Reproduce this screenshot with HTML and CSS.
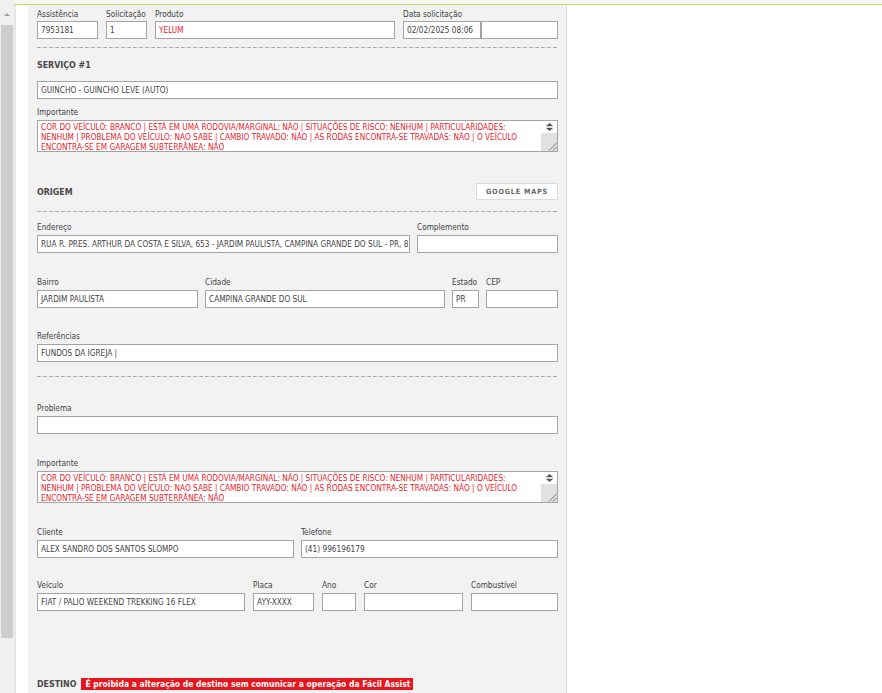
FILE: index.html
```html
<!DOCTYPE html>
<html lang="pt-BR">
<head>
<meta charset="utf-8">
<title>Serviço</title>
<link rel="stylesheet" href="styles.css">
</head>
<body>
<div class="app">
  <div class="vscroll">
    <div class="vscroll-arrow"></div>
    <div class="vscroll-thumb"></div>
  </div>
  <div class="main">
    <div class="topstrip"></div>
    <div class="frame">
      <div class="gutter"></div>
      <div class="panel">

        <div class="row row-head">
          <div class="field w-assist"><div class="lbl">Assistência</div><div class="inp">7953181</div></div>
          <div class="field w-solic"><div class="lbl">Solicitação</div><div class="inp">1</div></div>
          <div class="field w-prod"><div class="lbl">Produto</div><div class="inp red">YELUM</div></div>
          <div class="field w-data">
            <div class="lbl">Data solicitação</div>
            <div class="pair"><div class="inp w-data1">02/02/2025 08:06</div><div class="inp w-data2"></div></div>
          </div>
        </div>

        <div class="dash dash-1"></div>

        <div class="title title-servico">SERVIÇO #1</div>
        <div class="inp inp-servico">GUINCHO - GUINCHO LEVE (AUTO)</div>

        <div class="field blk-imp1">
          <div class="lbl">Importante</div>
          <div class="tarea">
            <div class="tarea-text">
              <div class="tline">COR DO VEÍCULO: BRANCO | ESTÁ EM UMA RODOVIA/MARGINAL: NÃO | SITUAÇÕES DE RISCO: NENHUM | PARTICULARIDADES:</div>
              <div class="tline">NENHUM | PROBLEMA DO VEÍCULO: NAO SABE | CAMBIO TRAVADO: NÃO | AS RODAS ENCONTRA-SE TRAVADAS: NÃO | O VEÍCULO</div>
              <div class="tline">ENCONTRA-SE EM GARAGEM SUBTERRÂNEA: NÃO</div>
            </div>
            <div class="tscroll">
              <div class="tspin">
                <svg width="9" height="10" viewBox="0 0 9 10"><path d="M4.5 1 L8 4 L1 4 Z" fill="#555"/><path d="M1 5 H8" stroke="#bbb" stroke-width="1"/><path d="M1 6 L8 6 L4.5 9 Z" fill="#555"/></svg>
              </div>
              <div class="ttrack">
                <svg class="grip" width="9" height="9" viewBox="0 0 9 9"><path d="M8.5 1 L1 8.5 M8.5 5 L5 8.5" stroke="#777" stroke-width="1"/></svg>
              </div>
            </div>
          </div>
        </div>

        <div class="title-row row-origem">
          <div class="title">ORIGEM</div>
          <div class="btn">GOOGLE MAPS</div>
        </div>

        <div class="dash dash-2"></div>

        <div class="row row-end">
          <div class="field w-end"><div class="lbl">Endereço</div><div class="inp">RUA R. PRES. ARTHUR DA COSTA E SILVA, 653 - JARDIM PAULISTA, CAMPINA GRANDE DO SUL - PR, 83430-000</div></div>
          <div class="field w-comp"><div class="lbl">Complemento</div><div class="inp"></div></div>
        </div>

        <div class="row row-bairro">
          <div class="field w-bairro"><div class="lbl">Bairro</div><div class="inp">JARDIM PAULISTA</div></div>
          <div class="field w-cidade"><div class="lbl">Cidade</div><div class="inp">CAMPINA GRANDE DO SUL</div></div>
          <div class="field w-estado"><div class="lbl">Estado</div><div class="inp">PR</div></div>
          <div class="field w-cep"><div class="lbl">CEP</div><div class="inp"></div></div>
        </div>

        <div class="field blk-ref">
          <div class="lbl">Referências</div>
          <div class="inp">FUNDOS DA IGREJA |</div>
        </div>

        <div class="dash dash-3"></div>

        <div class="field blk-prob">
          <div class="lbl">Problema</div>
          <div class="inp"></div>
        </div>

        <div class="field blk-imp2">
          <div class="lbl">Importante</div>
          <div class="tarea">
            <div class="tarea-text">
              <div class="tline">COR DO VEÍCULO: BRANCO | ESTÁ EM UMA RODOVIA/MARGINAL: NÃO | SITUAÇÕES DE RISCO: NENHUM | PARTICULARIDADES:</div>
              <div class="tline">NENHUM | PROBLEMA DO VEÍCULO: NAO SABE | CAMBIO TRAVADO: NÃO | AS RODAS ENCONTRA-SE TRAVADAS: NÃO | O VEÍCULO</div>
              <div class="tline">ENCONTRA-SE EM GARAGEM SUBTERRÂNEA: NÃO</div>
            </div>
            <div class="tscroll">
              <div class="tspin">
                <svg width="9" height="10" viewBox="0 0 9 10"><path d="M4.5 1 L8 4 L1 4 Z" fill="#555"/><path d="M1 5 H8" stroke="#bbb" stroke-width="1"/><path d="M1 6 L8 6 L4.5 9 Z" fill="#555"/></svg>
              </div>
              <div class="ttrack">
                <svg class="grip" width="9" height="9" viewBox="0 0 9 9"><path d="M8.5 1 L1 8.5 M8.5 5 L5 8.5" stroke="#777" stroke-width="1"/></svg>
              </div>
            </div>
          </div>
        </div>

        <div class="row row-cli">
          <div class="field w-cli"><div class="lbl">Cliente</div><div class="inp">ALEX SANDRO DOS SANTOS SLOMPO</div></div>
          <div class="field w-tel"><div class="lbl">Telefone</div><div class="inp">(41) 996196179</div></div>
        </div>

        <div class="row row-veic">
          <div class="field w-veic"><div class="lbl">Veículo</div><div class="inp">FIAT / PALIO WEEKEND TREKKING 16 FLEX</div></div>
          <div class="field w-placa"><div class="lbl">Placa</div><div class="inp">AYY-XXXX</div></div>
          <div class="field w-ano"><div class="lbl">Ano</div><div class="inp"></div></div>
          <div class="field w-cor"><div class="lbl">Cor</div><div class="inp"></div></div>
          <div class="field w-comb"><div class="lbl">Combustível</div><div class="inp"></div></div>
        </div>

        <div class="title-row row-destino">
          <div class="title">DESTINO</div>
          <div class="badge">É proibida a alteração de destino sem comunicar a operação da Fácil Assist</div>
        </div>

      </div>
      <div class="rest"></div>
    </div>
  </div>
</div>
</body>
</html>
```

FILE: styles.css
```css
html, body {
  margin: 0;
  padding: 0;
  background: #fff;
}

body {
  font-family: "DejaVu Sans Condensed", "DejaVu Sans", sans-serif;
  font-stretch: condensed;
  font-size: 8.2px;
  color: #444;
}

.app {
  display: flex;
  height: 693px;
  overflow: hidden;
}

/* outer page scrollbar */
.vscroll {
  width: 14px;
  flex: none;
  background: #f0f0f0;
  display: flex;
  flex-direction: column;
  align-items: center;
}

.vscroll-arrow {
  margin-top: 13px;
  width: 0;
  height: 0;
  border-left: 3px solid transparent;
  border-right: 3px solid transparent;
  border-bottom: 3px solid #a3a3a3;
}

.vscroll-thumb {
  margin-top: 9px;
  width: 12px;
  height: 613px;
  background: #cdcdcd;
}

.main {
  flex: 1;
  display: flex;
  flex-direction: column;
}

.topstrip {
  height: 4px;
  background: #f7f7ef;
  border-bottom: 1px solid #c6d27a;
  flex: none;
}

.frame {
  flex: 1;
  display: flex;
}

.gutter {
  width: 12px;
  flex: none;
  border-left: 2px solid #e6e6e6;
  background: #fff;
}

.panel {
  width: 521px;
  flex: none;
  background: #f2f2f2;
  border-right: 1px solid #dadada;
  padding: 3px 8px 0 9px;
}

.rest {
  flex: 1;
  background: #fff;
}

/* form parts */
.row {
  display: flex;
  gap: 8px;
}

.field {
  display: flex;
  flex-direction: column;
}

.lbl {
  height: 12px;
  line-height: 10px;
  margin-bottom: 1px;
  white-space: nowrap;
  color: #3f3f3f;
}

.row-head .lbl {
  line-height: 12px;
}

.inp {
  box-sizing: border-box;
  height: 18px;
  line-height: 16px;
  border: 1px solid #a4a4a4;
  background: #fff;
  padding: 0 3px;
  white-space: nowrap;
  overflow: hidden;
  color: #444;
}

.red {
  color: #e8232b;
}

.pair {
  display: flex;
}

.w-assist { width: 61px; }
.w-solic { width: 41px; }
.w-prod { width: 240px; }
.w-data { width: 155px; }
.w-data1 { width: 78px; }
.w-data2 { width: 77px; }

.w-end { width: 373px; }
.w-comp { width: 141px; }
.row-end { gap: 7px; }

.row-bairro { gap: 7px; }
.w-bairro { width: 161px; }
.w-cidade { width: 240px; }
.w-estado { width: 27px; }
.w-cep { width: 72px; }

.row-cli { gap: 7px; }
.w-cli { width: 257px; }
.w-tel { width: 257px; }

.w-veic { width: 208px; }
.w-placa { width: 61px; }
.w-ano { width: 34px; }
.w-cor { width: 99px; }
.w-comb { width: 87px; }

.dash {
  height: 1px;
  background: repeating-linear-gradient(to right, #a8a8a8 0 4px, transparent 4px 6px);
}

.title {
  font-weight: bold;
  font-size: 8.8px;
  line-height: 12px;
  height: 12px;
  color: #474747;
  white-space: nowrap;
}

.title-row {
  display: flex;
  align-items: center;
}

.row-origem {
  justify-content: space-between;
  height: 17px;
}

.btn {
  box-sizing: border-box;
  width: 82px;
  height: 17px;
  line-height: 15px;
  border: 1px solid #dcdcdc;
  background: #fff;
  text-align: center;
  font-weight: bold;
  font-size: 7.2px;
  letter-spacing: 0.8px;
  color: #666;
}

.badge {
  margin-left: 5px;
  background: #e9141c;
  color: #fff;
  font-weight: bold;
  font-size: 8.5px;
  line-height: 12px;
  height: 12px;
  padding: 0 3px 0 4px;
  white-space: nowrap;
}

/* textarea look */
.tarea {
  box-sizing: border-box;
  height: 32px;
  border: 1px solid #a4a4a4;
  background: #fff;
  display: flex;
  overflow: hidden;
}

.tarea-text {
  flex: 1;
  padding: 1px 0 0 3px;
  color: #e8232b;
  line-height: 10px;
  overflow: hidden;
}

.tline {
  white-space: nowrap;
}

.tscroll {
  width: 16px;
  flex: none;
  display: flex;
  flex-direction: column;
}

.tspin {
  height: 12px;
  display: flex;
  justify-content: center;
  align-items: center;
}

.ttrack {
  flex: 1;
  background: #e1e1e1;
  display: flex;
  justify-content: flex-end;
  align-items: flex-end;
}

.grip {
  display: block;
}

/* vertical rhythm */
.dash-1 { margin-top: 8px; }
.title-servico { margin-top: 11px; }
.inp-servico { margin-top: 10px; }
.blk-imp1 { margin-top: 8px; }
.row-origem { margin-top: 31px; }
.dash-2 { margin-top: 11px; }
.row-end { margin-top: 10px; }
.row-bairro { margin-top: 24px; }
.blk-ref { margin-top: 23px; }
.dash-3 { margin-top: 14px; }
.blk-prob { margin-top: 26px; }
.blk-imp2 { margin-top: 24px; }
.row-cli { margin-top: 24px; }
.row-veic { margin-top: 22px; }
.row-destino { margin-top: 67px; }
```
